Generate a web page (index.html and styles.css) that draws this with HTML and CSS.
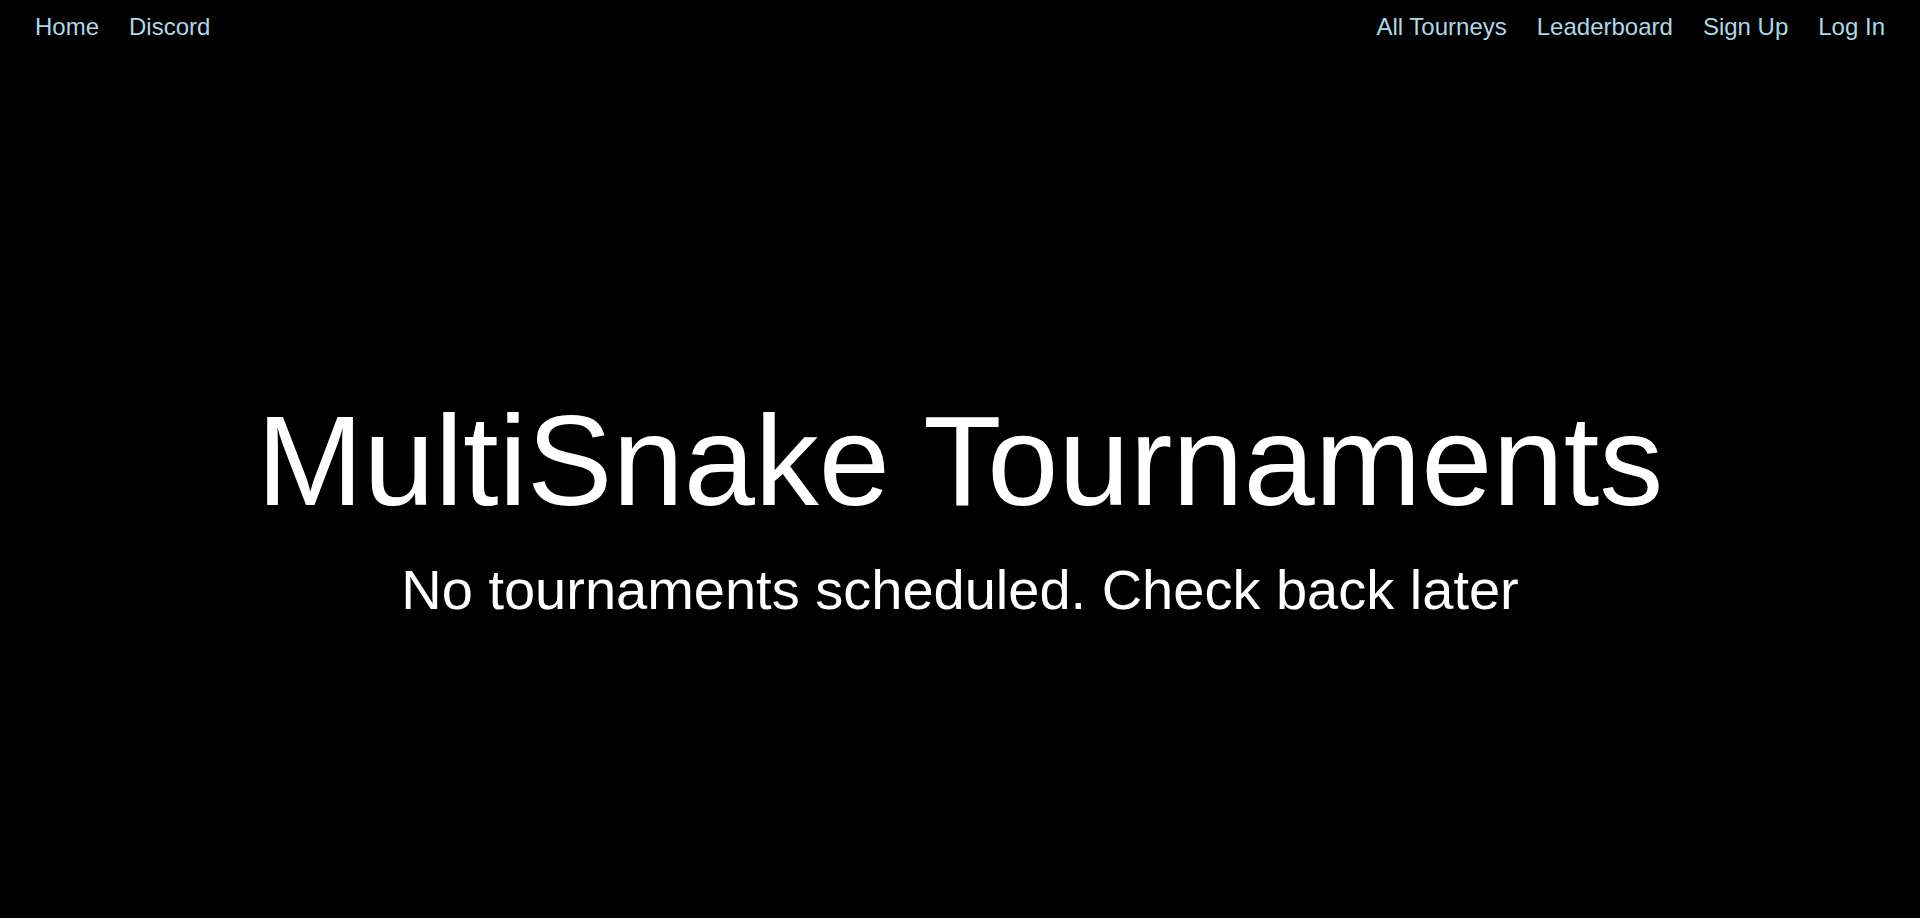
FILE: index.html
```html
<!DOCTYPE html>
<html lang="en">
<head>
<meta charset="utf-8">
<title>MultiSnake Tournaments</title>
<link rel="stylesheet" href="styles.css">
</head>
<body>
<nav class="topnav">
  <div class="nav-group">
    <a class="nav-link" href="#">Home</a>
    <a class="nav-link" href="#">Discord</a>
  </div>
  <div class="nav-group">
    <a class="nav-link" href="#">All Tourneys</a>
    <a class="nav-link" href="#">Leaderboard</a>
    <a class="nav-link" href="#">Sign Up</a>
    <a class="nav-link" href="#">Log In</a>
  </div>
</nav>
<main class="hero">
  <h1 class="hero-title">MultiSnake Tournaments</h1>
  <p class="hero-sub">No tournaments scheduled. Check back later</p>
</main>
</body>
</html>
```
FILE: styles.css
```css
html, body {
  margin: 0;
  padding: 0;
  background: #000;
  color: #fff;
  font-family: "Liberation Sans", Arial, sans-serif;
}

.topnav {
  display: flex;
  justify-content: space-between;
  align-items: center;
  padding: 13px 20px 11px;
  height: 28px;
}

.nav-group {
  display: flex;
}

.nav-link {
  color: #add8e6;
  text-decoration: none;
  font-size: 24px;
  line-height: normal;
  padding: 0 15px;
}

.hero {
  height: 830px;
  padding-top: 74px;
  box-sizing: border-box;
  display: flex;
  flex-direction: column;
  align-items: center;
  justify-content: center;
  text-align: center;
}

.hero-title {
  margin: 0 0 23px;
  font-size: 128px;
  font-weight: normal;
  line-height: normal;
}

.hero-sub {
  margin: 0;
  font-size: 56px;
  line-height: normal;
}
```
